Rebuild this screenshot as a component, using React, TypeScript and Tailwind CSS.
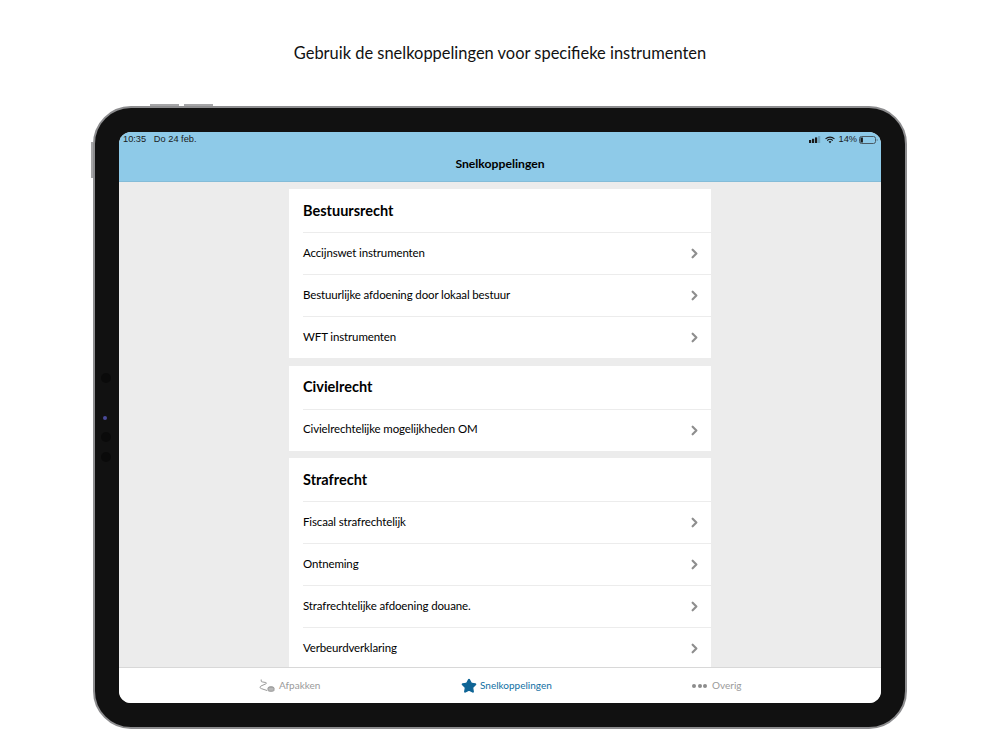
import { ChevronRight, Star } from "lucide-react";

const sections = [
  {
    title: "Bestuursrecht",
    items: ["Accijnswet instrumenten", "Bestuurlijke afdoening door lokaal bestuur", "WFT instrumenten"],
  },
  {
    title: "Civielrecht",
    items: ["Civielrechtelijke mogelijkheden OM"],
  },
  {
    title: "Strafrecht",
    items: ["Fiscaal strafrechtelijk", "Ontneming", "Strafrechtelijke afdoening douane.", "Verbeurdverklaring"],
  },
];

const Section = ({ title, items }: { title: string; items: string[] }) => {
  return (
    <section className="bg-white">
      <h2 className="h-[43px] pl-[14px] pt-[11.5px] text-[14.5px] leading-[20px] font-bold text-black">{title}</h2>
      {items.map((item) => (
        <div key={item} className="ml-[14px] h-[42px] flex items-center justify-between border-t border-[#ececec] pr-[9px]">
          <span className="pb-[2px] text-[11.5px] tracking-[-0.13px] text-black">{item}</span>
          <ChevronRight className="w-[15px] h-[15px] text-[#8e8e8e]" strokeWidth={3.5} />
        </div>
      ))}
    </section>
  );
};

const App = () => {
  return (
    <div className="w-[1000px] h-[750px] bg-white overflow-hidden font-['Lato',sans-serif]">
      <h1 className="pt-[43px] h-[106px] text-center text-[16.45px] leading-[20px] text-[#111]">
        Gebruik de snelkoppelingen voor specifieke instrumenten
      </h1>

      <div className="relative ml-[93px] w-[814px] h-[623px] rounded-[38px] bg-[#111] border-2 border-[#8d8d8f] p-[24px]">
        {/* hardware buttons */}
        <div className="absolute top-[-4px] left-[55px] w-[29px] h-[2px] bg-[#a5a5a7]" />
        <div className="absolute top-[-4px] left-[89px] w-[29px] h-[2px] bg-[#a5a5a7]" />
        <div className="absolute top-[34px] left-[-4px] w-[2px] h-[36px] bg-[#a5a5a7]" />
        {/* side camera dots */}
        <div className="absolute left-[6px] top-[265px] w-[10px] h-[10px] rounded-full bg-[#0a0a0a]" />
        <div className="absolute left-[8px] top-[308px] w-[4px] h-[4px] rounded-full bg-[#4a4a9a]" />
        <div className="absolute left-[6px] top-[324px] w-[10px] h-[10px] rounded-full bg-[#0a0a0a]" />
        <div className="absolute left-[6px] top-[344px] w-[10px] h-[10px] rounded-full bg-[#0a0a0a]" />

        <div className="w-[762px] h-[571px] rounded-[12px] overflow-hidden bg-[#ececec] flex flex-col">
          <header className="h-[50px] shrink-0 bg-[#8ecae8] border-b border-[#84bcd8]">
            <div className="h-[15px] flex items-center justify-between pl-[4px] pr-[3px] text-[9.25px] text-[#1a1a1a] font-['Liberation_Sans',sans-serif]">
              <span>10:35&nbsp;&nbsp; Do 24 feb.</span>
              <span className="flex items-center gap-[3px]">
                <svg width="12" height="7" viewBox="0 0 12 7">
                  <rect x="0" y="4" width="2.2" height="3" fill="#1a1a1a" />
                  <rect x="3" y="2.8" width="2.2" height="4.2" fill="#1a1a1a" />
                  <rect x="6" y="1.4" width="2.2" height="5.6" fill="#1a1a1a" />
                  <rect x="9" y="0" width="2.2" height="7" fill="#6ea3bf" />
                </svg>
                <svg className="ml-[1px]" width="10" height="8" viewBox="0 0 11 8" fill="none" stroke="#1a1a1a" strokeWidth="1.2">
                  <path d="M0.6 2.8a7 7 0 0 1 9.8 0" />
                  <path d="M2.4 4.6a4.4 4.4 0 0 1 6.2 0" />
                  <path d="M5.5 7.6l-1.6-1.6a2.2 2.2 0 0 1 3.2 0z" fill="#1a1a1a" stroke="none" />
                </svg>
                <span>14%</span>
                <svg className="-ml-[1px]" width="19" height="8" viewBox="0 0 19 8" fill="none">
                  <rect x="0.5" y="0.5" width="16" height="7" rx="2" stroke="#4a5a64" />
                  <rect x="1.5" y="1.5" width="2.4" height="5" fill="#1a1a1a" />
                  <path d="M17.8 2.8a1.4 1.4 0 0 1 0 2.4z" fill="#4a5a64" />
                </svg>
              </span>
            </div>
            <div className="text-center text-[12.2px] leading-[33px] font-bold text-black">Snelkoppelingen</div>
          </header>

          <main className="flex-1 min-h-0 overflow-hidden pt-[7px]">
            <div className="w-[422px] mx-auto flex flex-col gap-[7.5px]">
              {sections.map((section) => (
                <Section key={section.title} title={section.title} items={section.items} />
              ))}
            </div>
          </main>

          <nav className="h-[36px] shrink-0 bg-white border-t border-[#d8d8d8] flex items-center text-[10px]">
            <div className="ml-[140px] w-[202px] flex items-center gap-[4px] text-[#9a9a9a]">
              <svg width="16" height="15" viewBox="0 0 16 15" fill="none" stroke="#9a9a9a" strokeWidth="1">
                <path d="M2.2 1.5v1.5c0 .6.4.8 1 .9l3.5.6c.8.1 1 1 .2 1.3L2 8c-1.2.5-1.2 2.4.3 2.6L8 12.5" />
                <ellipse cx="12" cy="10" rx="3" ry="1.3" fill="#a8a8a8" />
                <path d="M9 10v2.5c0 1 6 1 6 0V10" fill="#b8b8b8" />
              </svg>
              <span>Afpakken</span>
            </div>
            <div className="w-[231px] flex items-center gap-[3px] text-[#0f6fa3]">
              <Star className="w-[16px] h-[16px] text-[#0f6596]" fill="#0f6596" />
              <span>Snelkoppelingen</span>
            </div>
            <div className="flex items-center gap-[5px] text-[#9a9a9a]">
              <span className="flex gap-[1.5px]">
                <span className="w-[4px] h-[4px] rounded-full bg-[#8c8c8c]" />
                <span className="w-[4px] h-[4px] rounded-full bg-[#8c8c8c]" />
                <span className="w-[4px] h-[4px] rounded-full bg-[#8c8c8c]" />
              </span>
              <span>Overig</span>
            </div>
          </nav>
        </div>
      </div>
    </div>
  );
};

export default App;
